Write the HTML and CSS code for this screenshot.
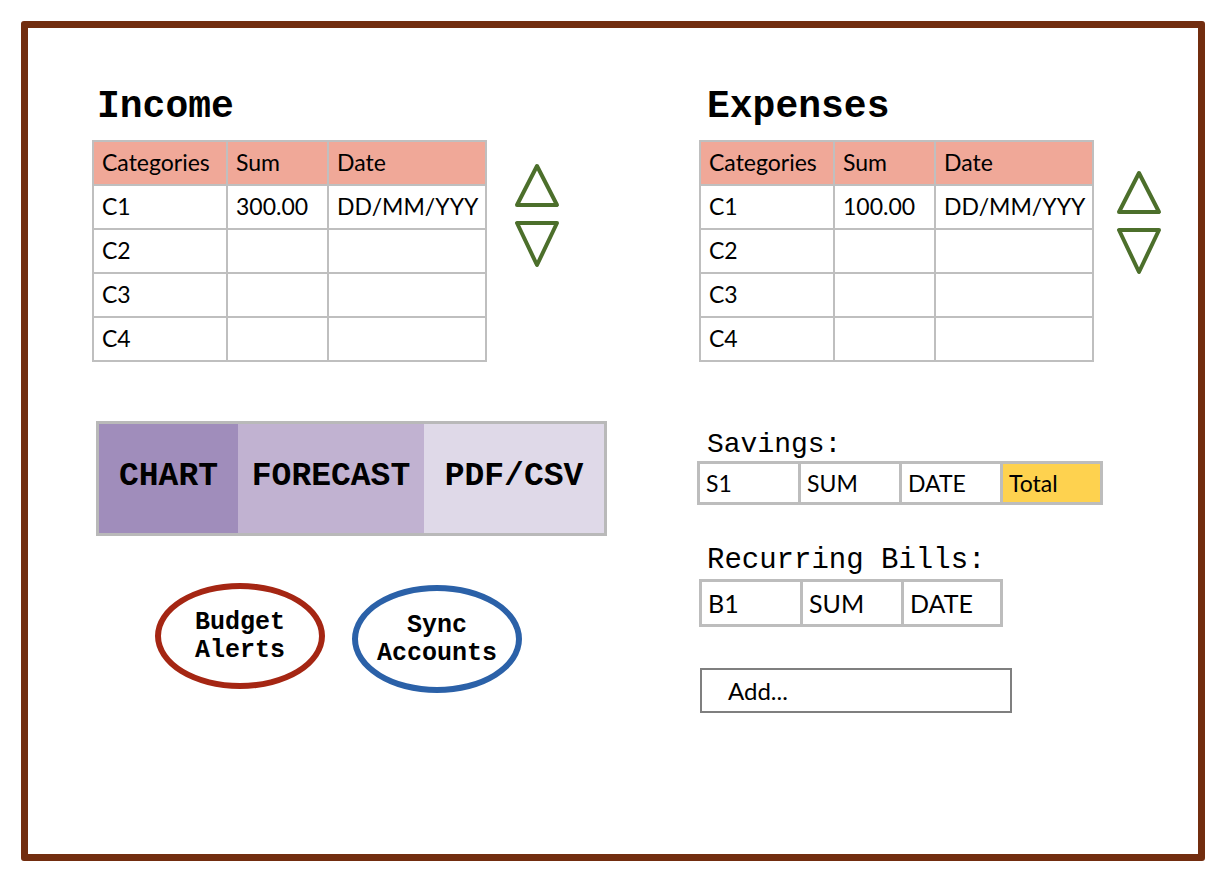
FILE: index.html
```html
<!DOCTYPE html>
<html lang="en">
<head>
<meta charset="utf-8">
<title>Budget</title>
<link rel="stylesheet" href="styles.css">
</head>
<body>
<div class="frame">
  <section class="col col-left">
    <h1 class="title title-income">Income</h1>
    <div class="table-row">
      <div class="grid-table">
        <div class="cell head">Categories</div><div class="cell head">Sum</div><div class="cell head">Date</div>
        <div class="cell">C1</div><div class="cell">300.00</div><div class="cell">DD/MM/YYY</div>
        <div class="cell">C2</div><div class="cell"></div><div class="cell"></div>
        <div class="cell">C3</div><div class="cell"></div><div class="cell"></div>
        <div class="cell">C4</div><div class="cell"></div><div class="cell"></div>
      </div>
      <svg class="sorter sorter-income" width="48" height="108" viewBox="0 0 48 108">
        <path d="M24 4 L44 43 L4 43 Z"/>
        <path d="M4 61 L44 61 L24 103 Z"/>
      </svg>
    </div>
    <div class="tabs">
      <div class="tab tab-chart">CHART</div>
      <div class="tab tab-forecast">FORECAST</div>
      <div class="tab tab-export">PDF/CSV</div>
    </div>
    <div class="ovals">
      <div class="oval oval-alerts"><span>Budget</span><span>Alerts</span></div>
      <div class="oval oval-sync"><span>Sync</span><span>Accounts</span></div>
    </div>
  </section>
  <section class="col col-right">
    <h1 class="title title-expenses">Expenses</h1>
    <div class="table-row">
      <div class="grid-table">
        <div class="cell head">Categories</div><div class="cell head">Sum</div><div class="cell head">Date</div>
        <div class="cell">C1</div><div class="cell">100.00</div><div class="cell">DD/MM/YYY</div>
        <div class="cell">C2</div><div class="cell"></div><div class="cell"></div>
        <div class="cell">C3</div><div class="cell"></div><div class="cell"></div>
        <div class="cell">C4</div><div class="cell"></div><div class="cell"></div>
      </div>
      <svg class="sorter sorter-expenses" width="48" height="108" viewBox="0 0 48 108">
        <path d="M24 4 L44 43 L4 43 Z"/>
        <path d="M4 61 L44 61 L24 103 Z"/>
      </svg>
    </div>
    <p class="label label-savings">Savings:</p>
    <div class="strip strip-savings">
      <div class="scell">S1</div><div class="scell">SUM</div><div class="scell">DATE</div><div class="scell total">Total</div>
    </div>
    <p class="label label-bills">Recurring Bills:</p>
    <div class="strip strip-bills">
      <div class="scell">B1</div><div class="scell">SUM</div><div class="scell">DATE</div>
    </div>
    <div class="add-box">Add...</div>
  </section>
</div>
</body>
</html>
```
FILE: styles.css
```css
body {
  margin: 0;
  background: #ffffff;
  font-family: "Lato", "Open Sans", sans-serif;
  color: #000;
}

.frame {
  box-sizing: border-box;
  width: 1184px;
  height: 840px;
  margin: 21px 0 0 21px;
  border: 7px solid #722d0f;
  border-radius: 3px;
  display: flex;
  padding: 58px 0 0 64px;
}

.col-left {
  width: 607px;
  flex: none;
}

.col-right {
  flex: 1;
}

.title {
  margin: 0;
  font: bold 38px/42px "Liberation Mono", "Courier New", monospace;
}

.title-income {
  padding-left: 5px;
}

.title-expenses {
  padding-left: 8px;
}

.table-row {
  display: flex;
  align-items: flex-start;
  margin-top: 12px;
}

.grid-table {
  display: grid;
  grid-template-columns: 132px 99px 156px;
  grid-auto-rows: 42px;
  gap: 2px;
  padding: 2px;
  background: #bfbfbf;
}

.cell {
  background: #fff;
  display: flex;
  align-items: center;
  padding: 0 0 3px 8px;
  font-size: 23px;
}

.cell.head {
  background: #f0a898;
}

.sorter {
  flex: none;
  fill: none;
  stroke: #4c6f2b;
  stroke-width: 4;
  stroke-linejoin: round;
}

.sorter-income {
  margin: 22px 0 0 26px;
}

.sorter-expenses {
  margin: 29px 0 0 21px;
}

.tabs {
  box-sizing: border-box;
  width: 511px;
  height: 115px;
  margin: 59px 0 0 4px;
  border: 3px solid #b9b9b9;
  display: flex;
}

.tab {
  display: flex;
  align-items: center;
  justify-content: center;
  padding-bottom: 4px;
  font: bold 33px "Liberation Mono", "Courier New", monospace;
}

.tab-chart {
  width: 139px;
  background: #a08dbb;
}

.tab-forecast {
  width: 186px;
  background: #c1b2d1;
}

.tab-export {
  flex: 1;
  background: #dfd9e8;
}

.ovals {
  display: flex;
  align-items: flex-start;
  gap: 27px;
  margin-top: 47px;
  padding-left: 63px;
}

.oval {
  box-sizing: border-box;
  width: 170px;
  height: 106px;
  border: 6px solid;
  border-radius: 50%;
  display: flex;
  flex-direction: column;
  align-items: center;
  justify-content: center;
  padding-top: 2px;
  font: bold 25px/28.5px "Liberation Mono", "Courier New", monospace;
}

.oval-alerts {
  border-color: #a52613;
}

.oval-sync {
  border-color: #2b61a8;
  height: 108px;
  margin-top: 2px;
}

.label {
  margin: 0;
  padding-left: 8px;
  font: 28px/32px "Liberation Mono", "Courier New", monospace;
}

.label-savings {
  margin-top: 67px;
}

.label-bills {
  margin-top: 40px;
  font-size: 29px;
}

.strip {
  display: grid;
  width: max-content;
  gap: 3px;
  padding: 3px;
  background: #bdbdbd;
}

.strip-savings {
  grid-template-columns: 98px 98px 98px 97px;
  grid-auto-rows: 38px;
  margin-left: -2px;
}

.strip-bills {
  grid-template-columns: 98px 98px 96px;
  grid-auto-rows: 42px;
  margin-top: 2px;
}

.scell {
  background: #fff;
  display: flex;
  align-items: center;
  padding-left: 6px;
  font-size: 23px;
}

.strip-bills .scell {
  font-size: 25px;
}

.scell.total {
  background: #fed24f;
}

.add-box {
  box-sizing: border-box;
  width: 312px;
  height: 45px;
  margin: 41px 0 0 1px;
  border: 2px solid #7f7f7f;
  display: flex;
  align-items: center;
  padding-left: 26px;
  font-size: 24px;
}
```
